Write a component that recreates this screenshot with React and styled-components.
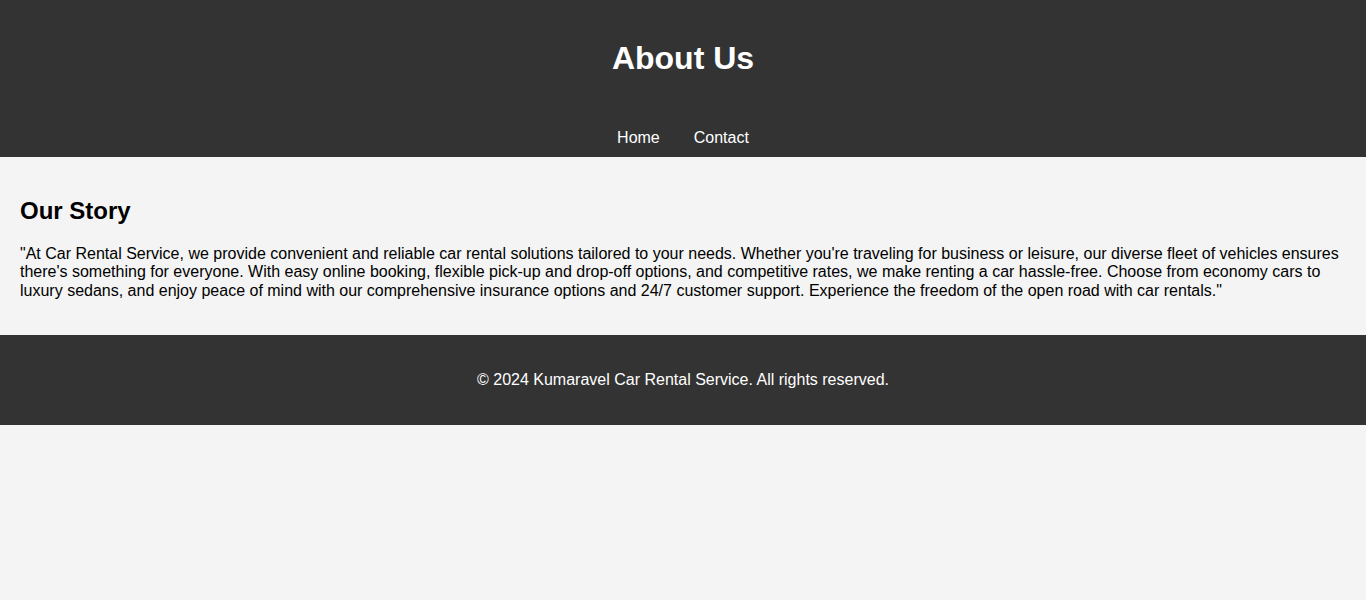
import React from 'react';
import styled, { createGlobalStyle } from 'styled-components';

const GlobalStyle = createGlobalStyle`
  body {
    margin: 0;
    font-family: "Liberation Sans", Arial, sans-serif;
    background-color: #f4f4f4;
    color: #000;
  }
`;

const Header = styled.header`
  background-color: #333;
  color: #fff;
  text-align: center;
  padding: 20px 0 0;
`;

const Title = styled.h1`
  font-size: 32px;
  line-height: 37px;
  margin: 20px 0 22px;
`;

const Nav = styled.nav`
  padding: 30px 0 10px;
`;

const NavList = styled.ul`
  list-style: none;
  margin: 0;
  padding: 0;
  display: flex;
  justify-content: center;
  gap: 34px;
`;

const NavLink = styled.a`
  color: #fff;
  text-decoration: none;
  font-size: 16px;
  line-height: 18px;
`;

const Main = styled.main`
  padding: 20px 20px 19px;
`;

const SectionTitle = styled.h2`
  font-size: 24px;
  line-height: 28px;
  margin: 20px 0;
`;

const Story = styled.p`
  font-size: 16px;
  line-height: 18.4px;
  margin: 16px 0;
`;

const Footer = styled.footer`
  background-color: #333;
  color: #fff;
  text-align: center;
  padding: 20px;
  p {
    margin: 16px 0;
    font-size: 16px;
    line-height: 18px;
  }
`;

const App = () => {
  return (
    <>
      <GlobalStyle />
      <Header>
        <Title>About Us</Title>
        <Nav>
          <NavList>
            <li><NavLink href="#">Home</NavLink></li>
            <li><NavLink href="#">Contact</NavLink></li>
          </NavList>
        </Nav>
      </Header>
      <Main>
        <SectionTitle>Our Story</SectionTitle>
        <Story>
          "At Car Rental Service, we provide convenient and reliable car rental solutions tailored to your needs. Whether you're traveling for business or leisure, our diverse fleet of vehicles ensures there's something for everyone. With easy online booking, flexible pick-up and drop-off options, and competitive rates, we make renting a car hassle-free. Choose from economy cars to luxury sedans, and enjoy peace of mind with our comprehensive insurance options and 24/7 customer support. Experience the freedom of the open road with car rentals."
        </Story>
      </Main>
      <Footer>
        <p>© 2024 Kumaravel Car Rental Service. All rights reserved.</p>
      </Footer>
    </>
  );
};

export default App;
